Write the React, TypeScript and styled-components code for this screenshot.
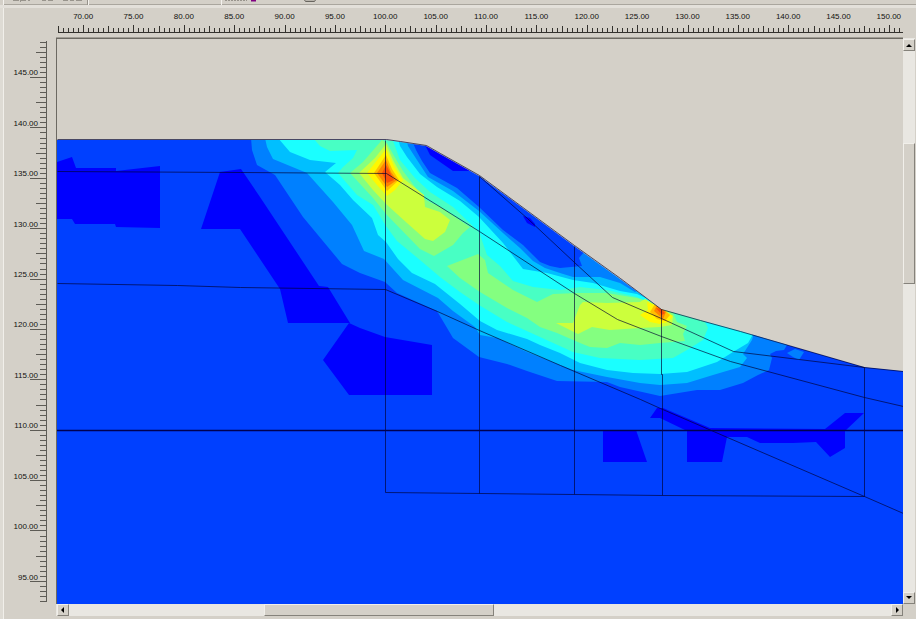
import React from "react";
import styled, { createGlobalStyle } from "styled-components";

const colors = {
  face: "#d4d0c8",
  light: "#f1efea",
  track: "#e9e7e2",
  shadow: "#85827b",
  ink: "#34322e",
};

const GlobalStyle = createGlobalStyle`
  * { box-sizing: border-box; }
  html, body, #root { height: 100%; }
  body {
    margin: 0;
    overflow: hidden;
    background: ${colors.face};
    font-family: "Liberation Sans", Arial, sans-serif;
  }
`;

const Page = styled.div`
  display: grid;
  grid-template-rows: 8px minmax(0, 1fr);
  height: 100vh;
`;

const ToolbarEdge = styled.header`
  display: flex;
  border-bottom: 3px solid #e3e0da;
`;

const EdgeDrawing = styled.svg`
  flex: none;
  display: block;
  width: 330px;
  height: 5px;
`;

const EdgeLine = styled.div`
  flex: 1;
  border-bottom: 1px solid #aaa69e;
`;

const Workspace = styled.main`
  display: grid;
  grid-template-columns: 56px minmax(0, 1fr) 12px;
  grid-template-rows: 16px 14px minmax(0, 1fr) 12px;
  padding: 0 1px 3px 0;
  background: linear-gradient(90deg, #dedbd4 3px, ${colors.light} 3px, ${colors.light} 4px, transparent 4px);
`;

const TopLabels = styled.div`
  grid-column: 2 / 4;
  grid-row: 1;
  display: grid;
  grid-auto-flow: column;
  grid-auto-columns: minmax(0, 1fr);
  padding: 1px 1px 0 2px;
`;

const SideLabels = styled.div`
  grid-column: 1;
  grid-row: 3;
  display: grid;
  grid-auto-rows: minmax(0, 1fr);
  padding: 10px 18px 1px 0;
`;

const Label = styled.span<{ $side?: boolean }>`
  display: flex;
  align-items: center;
  justify-content: ${(p) => (p.$side ? "flex-end" : "center")};
  font-size: 8px;
  line-height: 10px;
  color: #11100f;
`;

const Ticks = styled.svg<{ $side?: boolean }>`
  grid-column: ${(p) => (p.$side ? 1 : 2)};
  grid-row: ${(p) => (p.$side ? 3 : 2)};
  display: block;
  width: ${(p) => (p.$side ? "56px" : "100%")};
  height: ${(p) => (p.$side ? "100%" : "14px")};
  fill: none;
  stroke: ${(p) => (p.$side ? "#5d5b55" : colors.ink)};
`;

const Plot = styled.div`
  grid-column: 2;
  grid-row: 3;
  min-height: 0;
  border-top: 1px solid #6c6962;
  border-left: 1px solid #6c6962;
  box-shadow: 0 -1px 0 #a09c94;
`;

const PlotDrawing = styled.svg`
  display: block;
  width: 100%;
  height: 100%;
`;

const ScrollBar = styled.div<{ $vertical?: boolean }>`
  grid-column: ${(p) => (p.$vertical ? 3 : 2)};
  grid-row: ${(p) => (p.$vertical ? 3 : 4)};
  display: flex;
  flex-direction: ${(p) => (p.$vertical ? "column" : "row")};
  min-width: 0;
  min-height: 0;
  background: ${colors.track};
  padding: ${(p) => (p.$vertical ? "1px 0 0" : "0 0 0 1px")};
`;

const ScrollButton = styled.button`
  flex: 0 0 12px;
  display: flex;
  align-items: center;
  justify-content: center;
  width: 12px;
  height: 12px;
  padding: 0;
  border: 1px solid;
  border-color: ${colors.light} ${colors.shadow} ${colors.shadow} ${colors.light};
  background: ${colors.face};
`;

const Arrow = styled.svg`
  display: block;
  width: 6px;
  height: 6px;
`;

const Gap = styled.div<{ $share: number }>`
  flex: ${(p) => p.$share} 1 0;
`;

const Thumb = styled.div<{ $share: number }>`
  flex: ${(p) => p.$share} 1 0;
  border: 1px solid;
  border-color: ${colors.light} ${colors.shadow} ${colors.shadow} ${colors.light};
  background: ${colors.face};
`;

type Region = { fill: string; points: string };

const GROUND =
  "57,140 386,140 400,142 426,146 440,154 479,176 574,246 620,279 661,309 700,320 740,331 864,367 903,371 903,604 57,604";
const SKY =
  "57,39 903,39 903,371 864,367 740,331 700,320 661,309 620,279 574,246 479,176 440,154 426,146 400,142 386,140 57,140";

const DARK = "#0000ff";
const BASE = "#0040ff";
const AZURE = "#0080ff";
const SKYBLUE = "#00bfff";
const CYAN = "#1affff";
const MINT = "#48ffc4";
const GREEN = "#84ff80";
const LIME = "#ccff3c";
const YELLOW = "#fff800";
const AMBER = "#ffc000";
const ORANGE = "#ff8400";
const RED = "#fa5008";

// Painted from the lowest contour level to the highest.
const regions: Region[] = [
  { fill: BASE, points: GROUND },
  { fill: DARK, points: "57,162 72,157 76,168 116,168 116,171 160,166 160,228 116,227 115,224 75,224 72,219 57,219" },
  { fill: DARK, points: "220,172 241,169 260,197 319,286 328,287 350,323 288,323 280,289 240,229 201,229" },
  { fill: DARK, points: "349,323 360,328 385,337 432,345 432,395 349,395 323,360" },
  { fill: DARK, points: "603,430 636,430 647,462 603,462" },
  {
    fill: DARK,
    points:
      "650,418 657,408 663,408 710,428 825,429 845,413 864,413 845,431 845,448 830,457 816,442 793,443 760,443 747,437 727,437 722,462 687,462 687,431 660,418",
  },
  {
    fill: AZURE,
    points:
      "251,138 252,150 257,165 275,175 303,217 342,264 360,273 385,282 397,293 437,311 453,338 479,357 507,364 527,371 557,381 607,382 620,387 660,396 697,390 720,390 743,383 758,375 769,370 772,358 770,354 776,351 784,350 790,340 661,300 574,240 479,170 426,140",
  },
  { fill: AZURE, points: "787,353 795,349 804,352 799,360 793,357" },
  {
    fill: SKYBLUE,
    points:
      "265,138 267,147 273,159 307,173 333,202 352,225 364,251 384,259 403,280 438,298 453,311 475,327 480,335 497,338 527,352 560,365 573,370 607,377 640,383 660,385 687,383 713,375 740,367 747,358 743,354 752,340 755,330 661,300 574,240 479,170 426,140",
  },
  {
    fill: CYAN,
    points:
      "278,138 290,152 310,160 336,163 325,172 340,185 353,200 372,218 378,235 386,242 398,259 412,273 435,284 460,304 480,321 497,330 527,339 540,345 560,353 580,363 607,370 633,373 660,374 687,372 705,366 717,362 733,352 748,343 752,336 752,326 661,300 574,240 479,170 426,140",
  },
  {
    fill: MINT,
    points:
      "313,138 320,146 330,151 357,150 353,158 343,167 338,173 357,195 373,205 386,226 397,241 420,260 440,277 460,292 479,305 507,322 540,337 573,352 600,358 640,360 673,358 687,350 703,340 708,328 700,312 661,300 574,240 479,170 426,140",
  },
  // Upper envelopes: the field falls again towards the free face of the slope.
  {
    fill: CYAN,
    points:
      "392,138 400,160 415,178 430,192 453,207 479,232 487,255 500,266 513,281 533,287 560,290 580,287 607,290 637,297 661,309 661,290 574,230 479,165 426,138",
  },
  {
    fill: SKYBLUE,
    points:
      "398,138 400,146 407,157 420,174 437,187 460,201 479,217 503,243 523,269 547,273 573,280 593,283 620,291 637,294 650,300 574,230 479,165 426,138",
  },
  {
    fill: AZURE,
    points:
      "406,138 408,146 417,160 428,177 453,191 479,211 503,233 520,248 533,261 545,268 560,273 573,277 600,277 620,283 635,292 640,290 574,230 479,165 426,138",
  },
  {
    fill: BASE,
    points:
      "411,138 416,150 422,161 430,173 457,188 479,207 503,230 523,245 540,262 550,266 560,268 582,266 579,258 584,252 574,230 479,165 426,138",
  },
  { fill: DARK, points: "424,143 430,155 453,171 473,171 450,155" },
  { fill: DARK, points: "523,216 530,218 535,224 535,227 527,223" },
  {
    fill: GREEN,
    points:
      "350,173 363,162 382,140 387,143 394,156 403,171 412,183 424,199 440,207 470,227 463,233 453,245 434,256 420,249 386,214 373,198",
  },
  {
    fill: GREEN,
    points:
      "447,266 478,254 485,260 488,273 513,290 537,302 553,294 577,293 607,293 637,298 650,302 661,307 673,313 677,322 687,326 683,334 685,341 660,343 640,345 620,343 607,348 590,347 580,343 557,333 540,327 527,318 507,308 480,292 460,278",
  },
  {
    fill: LIME,
    points:
      "359,173 375,158 386,144 393,160 403,178 424,195 425,207 440,212 450,220 445,232 433,241 425,239 407,223 386,204 373,190",
  },
  {
    fill: LIME,
    points:
      "556,323 573,323 580,305 583,302 607,303 640,302 645,299 661,308 673,317 672,325 660,327 640,328 610,330 592,327 578,334 570,330",
  },
  { fill: YELLOW, points: "367,173 386,149 395,168 403,180 395,190 387,196 377,185" },
  { fill: YELLOW, points: "640,315 648,310 647,302 661,308 673,316 668,322 660,324 650,322" },
  { fill: AMBER, points: "374,173 386,155 392,169 399,180 387,191" },
  { fill: AMBER, points: "650,312 655,304 662,308 670,315 665,321 657,319" },
  { fill: ORANGE, points: "377,173 386,160 391,172 397,180 387,187" },
  { fill: ORANGE, points: "654,311 657,305 666,312 663,319" },
  { fill: RED, points: "382,173 386,165 394,180 387,183" },
  { fill: RED, points: "656,308 661,309 665,313 662,315" },
  { fill: colors.face, points: SKY },
];

const meshLines = [
  "57,171 240,172 386,173 479,231 574,293 617,319 661,336 730,361 864,397 903,406",
  "479,176 527,218 574,262 612,297 661,318 733,351 864,367",
  "57,283 177,285 240,287 385,289 437,311 479,330 560,365 640,399 660,408 727,437 864,496 903,513",
  "385,140 385,492",
  "479,176 479,493",
  "574,246 574,494",
  "661,309 661,374 662,374 662,495",
  "864,367 864,496",
  "385,492 574,494 662,495 864,496",
];

const SURFACE = "57,139 386,139 400,141 426,145 440,153 479,175 574,245 620,278 661,309 700,320 740,331 864,367 903,371";

// Half-unit ticks; each tenth one is a labelled tick, each fifth a middle one.
function tickPath(count: number, start: number, firstIndex: number, draw: (at: number, kind: number) => string) {
  return Array.from({ length: count }, (_, i) => {
    const n = i + firstIndex;
    const kind = n % 10 === 0 ? 2 : n % 5 === 0 ? 1 : 0;
    return draw(Math.round(start + i * 5.038) + 0.5, kind);
  }).join("");
}

const topTicks = tickPath(168, 57.8, 5, (x, k) => `M${x} 33V${[28, 26, 25][k]}`);
const sideTicks = tickPath(112, 41.8, 3, (y, k) => `M47 ${y}H${[40, 36, 30][k]}`);

const topLabels = Array.from({ length: 17 }, (_, i) => (70 + i * 5).toFixed(2));
const sideLabels = Array.from({ length: 11 }, (_, i) => (145 - i * 5).toFixed(2));

const arrows = {
  up: "M0 5L3 2L6 5Z",
  down: "M0 1L3 4L6 1Z",
  left: "M4 0L1 3L4 6Z",
  right: "M2 0L5 3L2 6Z",
};

function ArrowButton({ direction }: { direction: keyof typeof arrows }) {
  return (
    <ScrollButton type="button" aria-label={`Scroll ${direction}`}>
      <Arrow viewBox="0 0 6 6" aria-hidden="true">
        <path d={arrows[direction]} fill="#000" />
      </Arrow>
    </ScrollButton>
  );
}

function ContourPlot() {
  return (
    <Plot>
      <PlotDrawing viewBox="57 39 846 565" preserveAspectRatio="none" role="img" aria-label="Slope contour plot">
        {regions.map((r, i) => (
          <polygon key={i} points={r.points} fill={r.fill} />
        ))}
        <g fill="none" stroke="#000030" strokeOpacity="0.66" transform="translate(0.5 0.5)">
          {meshLines.map((points) => (
            <polyline key={points} points={points} />
          ))}
          <polyline points={SURFACE} />
        </g>
        <path d="M57 430.5H903" stroke="#000050" strokeWidth="1.5" />
      </PlotDrawing>
    </Plot>
  );
}

export default function App() {
  return (
    <>
      <GlobalStyle />
      <Page>
        <ToolbarEdge>
          <EdgeDrawing viewBox="0 0 330 5" aria-hidden="true">
            <path d="M4 4.5H330" stroke="#aaa69e" />
            <path d="M87.5 0V5" stroke="#96928a" />
            <path d="M3.5 0V5M221.5 0V5M88.5 0V5" stroke="#f4f2ee" />
            <path d="M13 0.5h6M21 0.5h5M28 0.5h2M42 0.5h4M48 0.5h5M63 0.5h5M70 0.5h4M76 0.5h6" stroke="#98948c" />
            <path d="M20.5 0v2" stroke="#98948c" />
            <path d="M225 0.5h22" stroke="#98948c" strokeDasharray="2 1" />
            <path d="M251 0.5h5" stroke="#800080" strokeWidth="2" />
            <path d="M304.5 0l1 1.5h9l1-1.5" fill="#b8b4ac" stroke="#68655f" />
          </EdgeDrawing>
          <EdgeLine />
        </ToolbarEdge>
        <Workspace>
          <TopLabels>
            {topLabels.map((t) => (
              <Label key={t}>{t}</Label>
            ))}
          </TopLabels>
          <Ticks viewBox="56 24 847 14" preserveAspectRatio="none" aria-hidden="true">
            <path d={topTicks} />
            <path d="M58 32.5H903" />
          </Ticks>
          <Ticks $side viewBox="0 38 56 566" preserveAspectRatio="none" aria-hidden="true">
            <path d={sideTicks} />
            <path d="M46.5 41V602" />
          </Ticks>
          <SideLabels>
            {sideLabels.map((t) => (
              <Label key={t} $side>
                {t}
              </Label>
            ))}
          </SideLabels>
          <ContourPlot />
          <ScrollBar $vertical>
            <ArrowButton direction="up" />
            <Gap $share={92} />
            <Thumb $share={140} />
            <Gap $share={309} />
            <ArrowButton direction="down" />
          </ScrollBar>
          <ScrollBar>
            <ArrowButton direction="left" />
            <Gap $share={195} />
            <Thumb $share={229} />
            <Gap $share={398} />
            <ArrowButton direction="right" />
          </ScrollBar>
        </Workspace>
      </Page>
    </>
  );
}
